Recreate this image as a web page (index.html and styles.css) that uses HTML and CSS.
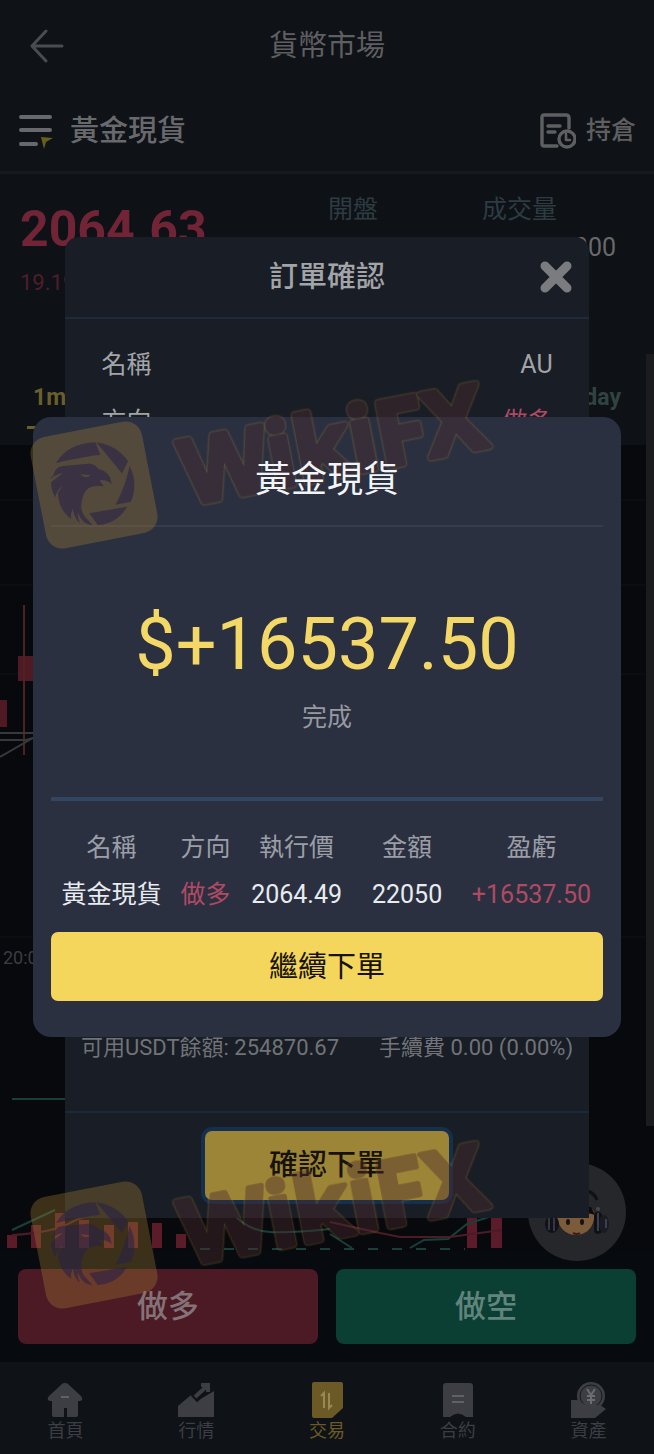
FILE: index.html
```html
<!DOCTYPE html>
<html lang="zh-Hant">
<head>
<meta charset="utf-8">
<meta name="viewport" content="width=device-width, initial-scale=1">
<title>貨幣市場</title>
<link rel="stylesheet" href="styles.css">
</head>
<body>
<div class="app">
    <header class="topbar">
        <button class="icon-btn" type="button" aria-label="返回">
            <svg width="34" height="34" viewBox="0 0 34 34" fill="none" stroke="currentColor" stroke-width="3" stroke-linecap="round" stroke-linejoin="round"><path d="M32 17H2M16 2 2 17l14 15"/></svg>
        </button>
        <h1>貨幣市場</h1>
    </header>
    <div class="subbar">
        <button class="symbol" type="button">
            <svg width="36" height="36" viewBox="0 0 36 36"><g stroke="currentColor" stroke-width="4" stroke-linecap="round"><path d="M3 4h29M3 17h29M3 31h15"/></g><path d="M23 24l12 1-7 4-2 7z" fill="#6a5e1c"/></svg>
            <span>黃金現貨</span>
        </button>
        <button class="holding" type="button">
            <svg width="36" height="36" viewBox="0 0 36 36" fill="none" stroke="currentColor" stroke-width="3.4" stroke-linecap="round" stroke-linejoin="round"><path d="M17 33H4q-2 0-2-2V4q0-2 2-2h22q3 0 3 3v10M8 13h12M8 19h7"/><circle cx="27" cy="26" r="8"/><path d="M26 21v6h4" stroke-width="2.6"/></svg>
            <span>持倉</span>
        </button>
    </div>

    <section class="quote">
        <div class="quote-row">
            <div class="price">
                <strong>2064.63</strong>
                <span>19.19</span>
            </div>
            <div class="open">開盤</div>
            <div class="volume">成交量<b>000</b></div>
        </div>
        <nav class="periods">
            <a href="#" class="on">1m</a>
            <a href="#">day</a>
        </nav>
    </section>

    <section class="chart">
        <svg class="chart-svg" viewBox="0 0 654 806" fill="none">
            <g stroke="#101116"><path d="M0 55h654M0 140h654M0 229h654M0 492h654"/></g>
            <!-- K線 -->
            <g fill="#4f1a23"><path d="M18 211h20v25H18zM0 255h7v27H0z"/></g>
            <path d="M24 160v150" stroke="#4a241f" stroke-width="2"/>
            <path d="M0 288h40M0 295h26l14-4M0 312l40-23" stroke="#36393a" stroke-width="2"/>
            <text x="3" y="519" class="axis">20:00</text>
            <path d="M12 654h60" stroke="#174038" stroke-width="2"/>
            <!-- 成交量柱 -->
            <g fill="#5b1b28"><path d="M7 790h10v13H7zM31 780h10v23H31zM55 768h10v35H55zM79 775h10v28H79zM104 780h10v23h-10zM128 777h10v26h-10zM152 778h10v25h-10zM176 789h10v14h-10zM467 770h10v33h-10zM491 770h11v33h-11z"/></g>
            <path d="M12 785l43-20M235 771q15 15 35 16t60-3M330 789l22 14M410 803l14-8 24-1 19-15 25-8" stroke="#174038" stroke-width="2"/>
            <path d="M12 790q40-2 60-13t40-4M330 777l50 11 20 4h50l52-7" stroke="#4b1c26" stroke-width="2"/>
            <path d="M200 804h265" stroke="#174038" stroke-width="2" stroke-dasharray="10 14"/>
        </svg>
        <button class="support" type="button" aria-label="客服">
            <svg viewBox="0 0 98 98" width="98" height="98">
                <g transform="translate(0 3)">
                <path d="M28 50q12 4 24-1l12-6q4 4 2 10-3 15-18 16-15 0-20-19z" fill="#7c5b3a"/>
                <path d="M53 48q2-8 10-7l4 8q-7-3-14-1z" fill="#0c0b0d"/>
                <ellipse cx="40" cy="56" rx="2" ry="3" fill="#17120f"/><ellipse cx="54" cy="56" rx="2" ry="3" fill="#17120f"/>
                <path d="M45 67q4 2 7 0" stroke="#401d18" stroke-width="2" fill="none"/>
                <ellipse cx="24" cy="58" rx="7" ry="9" fill="#101218"/><path d="M21 52v12M26 51v14" stroke="#343743" stroke-width="2"/>
                <rect x="66" y="46" width="8" height="22" rx="4" fill="#0f1117"/><ellipse cx="76" cy="58" rx="5" ry="9" fill="#191c24"/>
                <path d="M70 47v18M78 53v9" stroke="#3b3f49" stroke-width="2"/>
                <path d="M60 25q7 3 9 9" stroke="#101114" stroke-width="3" fill="none"/><circle cx="70" cy="43" r="2" fill="#45474b"/>
                </g>
            </svg>
        </button>
    </section>

    <div class="actions">
        <button class="buy" type="button">做多</button>
        <button class="sell" type="button">做空</button>
    </div>

    <nav class="tabbar">
        <a href="#"><svg viewBox="0 0 36 36"><path d="M18 1q2 0 3 1l13 12q3 4-1 5h-2v14q0 2-2 2h-9V26h-3v9H7q-2 0-2-2V19H3q-4-1-1-5L15 2q1-1 3-1z"/><path class="cut" d="M14 14h8v2h-8z"/></svg>首頁</a>
        <a href="#"><svg viewBox="0 0 36 36"><path d="M0 24l13-11 6 6 17-10v26H0z"/><path class="halo" d="M16 17 29 5"/><path class="gap" d="M17 15 29 4M23 3h7v7"/></svg>行情</a>
        <a href="#" class="on"><svg viewBox="0 0 36 36"><path d="M5 0h27q2 0 2 2v24l-11 10H5q-2 0-2-2V2q0-2 2-2z"/><path class="mark" d="M12 14l3-3v15M20 11v15l3-3"/></svg>交易</a>
        <a href="#"><svg viewBox="0 0 36 36"><path d="M6 1h24q3 0 3 3v31h-7q-8-7-16 0H3V4q0-3 3-3z"/><path class="cut" d="M12 13h12v2H12zM12 19h12v2H12z"/></svg>合約</a>
        <a href="#"><svg viewBox="0 0 36 36"><circle cx="20" cy="14" r="14"/><circle class="ring" cx="20" cy="14" r="11"/><path class="hand" d="M0 18h6l9 5h14l6 4-11 9H0z"/><path class="mark" d="M16 7l4 6 4-6M20 13v9M16 14h8M16 18h8"/></svg>資產</a>
    </nav>
    <div class="scrollbar"></div>
</div>

<div class="layer">
    <form class="order">
        <header class="order-head">
            <h2>訂單確認</h2>
            <button class="close" type="button" aria-label="關閉"><svg width="32" height="32" viewBox="0 0 32 32" stroke="currentColor" stroke-width="9" stroke-linecap="round"><path d="M5 5l22 22M27 5 5 27"/></svg></button>
        </header>
        <div class="order-body">
            <div class="field"><span>名稱</span><span>AU</span></div>
            <div class="field"><span>方向</span><span class="red">做多</span></div>
            <div class="balance"><span>可用USDT餘額: 254870.67</span><span>手續費 0.00 (0.00%)</span></div>
        </div>
        <footer class="order-foot">
            <button class="btn-yellow confirm" type="button">確認下單</button>
        </footer>
    </form>
</div>

<div class="layer">
    <section class="result">
        <h2 class="result-title"><span>黃金現貨</span></h2>
        <div class="profit">
            <div class="amount">$+16537.50</div>
            <div class="status">完成</div>
        </div>
        <table class="deal">
            <thead>
                <tr><th class="c-name">名稱</th><th class="c-side">方向</th><th class="c-price">執行價</th><th class="c-sum">金額</th><th class="c-gain">盈虧</th></tr>
            </thead>
            <tbody>
                <tr><td>黃金現貨</td><td class="red">做多</td><td>2064.49</td><td>22050</td><td class="red">+16537.50</td></tr>
            </tbody>
        </table>
        <button class="btn-yellow again" type="button">繼續下單</button>
    </section>
</div>

<!-- 浮水印 -->
<svg class="watermark wm-top" viewBox="0 0 1500 570">
    <defs>
        <g id="eagle">
            <rect x="112" y="175" width="340" height="340" rx="50" transform="rotate(-11 282 345)" fill="#aa8232" fill-opacity=".32"/>
            <g fill="#2a2248" fill-opacity=".6">
                <path d="M168 279q34-58 118-62l15 37q-50 6-81 14-28 5-52 11z"/>
                <path d="M289 217q63 10 95 57l-18 36z"/>
                <path d="M389 288q26 53 4 107l-46 9q29-55 42-116z"/>
                <path d="M268 430l113-20q-28 51-88 55z"/>
                <path d="M160 317q4-25 29-29l76-7q20 0 30 16 36 7 40 44-20-14-36-10l12 18q-50-8-62 30-12 35 3 58l26 29q-30 0-45-39 0 20 8 32-16-8-23-43-7 14-4 31-38-26-40-79l14-20q-16 10-23 34-12-24-12-45l36-28q-20 3-37 17 0-6 8-9zM240 313q15 16 32 3z" fill-rule="evenodd"/>
            </g>
        </g>
    </defs>
    <use href="#eagle"/>
    <text x="564" y="404" transform="rotate(-11 564 404)">WikiFX</text>
</svg>
<svg class="watermark wm-bottom" viewBox="0 0 1500 570">
    <use href="#eagle"/>
    <text x="564" y="404" transform="rotate(-11 564 404)">WikiFX</text>
</svg>
</body>
</html>
```

FILE: styles.css
```css
*{
	box-sizing:border-box;
}
body{
	margin:0;
	position:relative;
	background:#08090d;
	color:#68696c;
	font-family:Roboto, "Noto Sans CJK TC", sans-serif;
	font-size:25px;
	line-height:36px;
}
h1, h2{
	margin:0;
	font-weight:400;
}
button{
	margin:0;
	padding:0;
	border:0;
	background:none;
	color:inherit;
	font:inherit;
	cursor:pointer;
}
a{
	color:inherit;
	text-decoration:none;
}
svg{
	display:block;
}
.red{
	color:#b04a62;
}

/* 頁面 */
.app{
	position:relative;
	display:flex;
	flex-direction:column;
	min-height:100vh;
}
.topbar{
	display:grid;
	grid-template-columns:34px 1fr 34px;
	align-items:center;
	height:90px;
	padding:2px 30px 0;
	background:#0f1217;
}
.icon-btn{
	color:#4b4c50;
}
.topbar h1{
	font-size:29px;
	text-align:center;
	color:#5e5f61;
}
.subbar{
	display:flex;
	justify-content:space-between;
	align-items:center;
	height:84px;
	padding:0 18px;
	background:#0f1217;
	border-bottom:3px solid #151a21;
}
.symbol, .holding{
	display:flex;
	align-items:center;
	font-weight:500;
}
.symbol{
	gap:16px;
	font-size:29px;
}
.holding{
	gap:10px;
	color:#5e5f61;
}

/* 報價 */
.quote{
	height:271px;
	background:#0e1115;
}
.quote-row{
	display:grid;
	grid-template-columns:308px 154px 134px;
	height:200px;
	padding:18px 20px 0;
}
.price strong{
	display:block;
	margin-top:9px;
	font-size:50px;
	line-height:56px;
	color:#702436;
}
.price span{
	display:block;
	margin-top:8px;
	font-size:22px;
	color:#4e1e2a;
}
.open, .volume{
	color:#2d3c42;
}
.volume b{
	display:block;
	margin-top:2px;
	font-weight:400;
	text-align:right;
	color:#68696c;
}
.periods{
	display:flex;
	justify-content:space-between;
	padding:6px 33px 0 27px;
	font-size:23px;
	font-weight:700;
	color:#2f4440;
}
.periods .on{
	padding:0 6px 10px;
	border-bottom:3px solid #6a5f2c;
	color:#6a5f2c;
}

/* 圖表 */
.chart{
	position:relative;
	flex:1;
	min-height:806px;
	background:#08090d;
}
.chart-svg{
	width:100%;
}
.axis{
	font-size:18px;
	fill:#3b3c40;
}
.support{
	position:absolute;
	right:28px;
	bottom:-10px;
	width:98px;
	height:98px;
	border-radius:50%;
	background:#26272a;
}
.scrollbar{
	position:absolute;
	top:354px;
	right:0;
	width:8px;
	height:772px;
	background:#1b1c1e;
}

/* 下單按鈕 */
.actions{
	display:flex;
	gap:18px;
	padding:18px;
	background:#070a0f;
}
.actions button{
	flex:1;
	height:75px;
	border-radius:8px;
	font-size:31px;
	font-weight:500;
}
.actions .buy{
	background:#4c1a24;
	color:#837378;
}
.actions .sell{
	background:#0b3f33;
	color:#61857c;
}

/* 底部導航 */
.tabbar{
	display:grid;
	grid-template-columns:repeat(5, 1fr);
	height:92px;
	padding-top:20px;
	background:#0f1217;
	font-size:18px;
	line-height:26px;
	text-align:center;
	color:#3c3e44;
}
.tabbar svg{
	width:36px;
	height:36px;
	margin:0 auto;
	fill:currentColor;
}
.tabbar .on{
	color:#6c5a26;
}
.tabbar .cut{
	fill:#5f6168;
}
.tabbar .gap, .tabbar .halo{
	fill:none;
	stroke:currentColor;
	stroke-width:4;
}
.tabbar .halo{
	stroke:#0f1217;
	stroke-width:9;
}
.tabbar .ring, .tabbar .mark{
	fill:none;
	stroke:#15181d;
}
.tabbar .mark{
	stroke:#6b6d72;
	stroke-width:2;
}
.tabbar .on .mark{
	stroke:#9a8850;
}

/* 彈窗 */
.layer{
	position:absolute;
	top:0;
	right:0;
	bottom:0;
	left:0;
	display:flex;
	justify-content:center;
	align-items:center;
}
.btn-yellow{
	height:69px;
	border-radius:7px;
	background:#f5d65c;
	color:#171208;
	font-size:29px;
}
.order{
	width:80%;
	border-radius:14px 14px 0 0;
	background:#191d25;
	color:#a2a4a7;
}
.order-head{
	display:grid;
	grid-template-columns:32px 1fr 32px;
	align-items:center;
	height:82px;
	padding:0 17px;
	border-bottom:2px solid #202b37;
}
.order-head h2{
	grid-column:2;
	font-size:29px;
	font-weight:500;
	text-align:center;
}
.close{
	color:#7b7c80;
}
.order-body{
	display:flex;
	flex-direction:column;
	min-height:792px;
	padding:28px 18px 45px;
}
.field{
	display:flex;
	justify-content:space-between;
	padding:0 18px;
	margin-bottom:21px;
}
.balance{
	display:flex;
	justify-content:center;
	gap:40px;
	margin-top:auto;
	font-size:22px;
	white-space:nowrap;
	color:#707378;
}
.order-foot{
	height:107px;
	padding-top:18px;
	border-top:2px solid #1c2836;
	text-align:center;
}
.confirm{
	width:244px;
	background:#9c8536;
	font-weight:500;
	box-shadow:0 0 0 4px #14304e;
}

.result{
	width:90%;
	padding:0 18px 36px;
	border-radius:18px;
	background:#2a3040;
}
.result-title{
	height:110px;
	padding-top:45px;
	border-bottom:2px solid #373c4c;
	font-size:36px;
	text-align:center;
	color:#f2f5f8;
}
/* 標題要蓋在浮水印上面 */
.result-title span{
	position:relative;
	z-index:2;
}
.profit{
	padding:76px 0 61px;
	border-bottom:4px solid #34465f;
	text-align:center;
}
.amount{
	font-size:72px;
	line-height:84px;
	color:#f3d868;
}
.status{
	margin-top:13px;
	color:#9799a1;
}
.deal{
	width:100%;
	margin:23px 0 14px;
	border-collapse:collapse;
	table-layout:fixed;
	text-align:center;
	color:#e8ebef;
}
.deal th, .deal td{
	height:47px;
	padding:0;
	white-space:nowrap;
}
.deal th{
	font-weight:400;
	color:#9b9ea6;
}
.c-name{ width:22%; }
.c-side{ width:12%; }
.c-price{ width:21%; }
.c-sum{ width:19%; }
.c-gain{ width:26%; }
.again{
	display:block;
	width:100%;
}

/* 浮水印 */
.watermark{
	position:absolute;
	left:0;
	z-index:1;
	width:500px;
	height:190px;
	overflow:visible;
	pointer-events:none;
}
.watermark text{
	font-family:"Open Sans", sans-serif;
	font-size:270px;
	font-weight:700;
	fill:#4c2c30;
	stroke:#4c2c30;
	stroke-width:16px;
	stroke-linejoin:round;
	filter:drop-shadow(0 0 3px #b08c38) drop-shadow(0 0 1px #b08c38);
	opacity:.42;
}
.wm-top{ top:370px; }
.wm-bottom{ top:1130px; }
```
